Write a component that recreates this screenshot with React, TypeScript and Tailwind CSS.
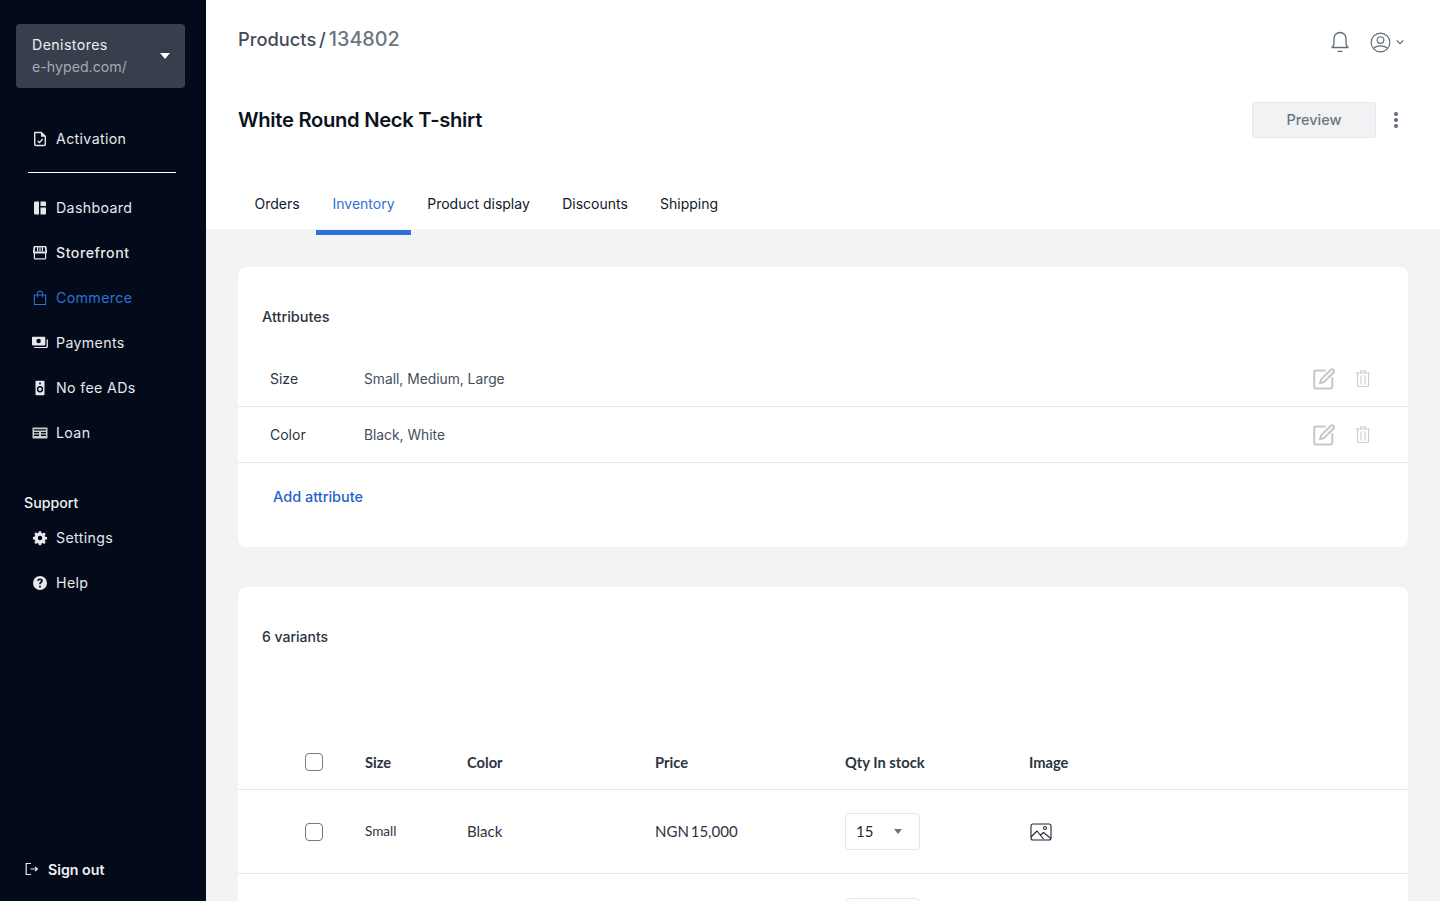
import React from "react";

const F = "[font-family:'Inter','Liberation_Sans',sans-serif]";

const Ic = ({ children, cls = "" }: { children: React.ReactNode; cls?: string }) => (
  <svg viewBox="0 0 16 16" className={"w-4 h-4 " + cls} fill="currentColor">{children}</svg>
);

const icons: Record<string, React.ReactNode> = {
  activation: <Ic><path fillRule="evenodd" d="M3 .8h6.500L14 5v8.500a1.700 1.700 0 0 1-1.700 1.700H3.700A1.700 1.700 0 0 1 2 13.500V1.800a1 1 0 0 1 1-1Zm.4 1.400v11.600h9.200V5.800H9V2.200ZM10.300 7.600l1 .9-3.800 4.100-2.200-2.200 1-1 1.200 1.200Z" /></Ic>,
  dashboard: <Ic><path d="M2 2.500A1 1 0 0 1 3 1.500h4v13H3a1 1 0 0 1-1-1ZM8.500 1.500H13a1 1 0 0 1 1 1V6H8.500ZM8.500 7.500H14v6a1 1 0 0 1-1 1H8.500Z" /></Ic>,
  store: <Ic><path fillRule="evenodd" d="M2.500 1h11a1 1 0 0 1 1 .8L15 6v1.200c0 .5-.3 1-.8 1.200V13a1.500 1.500 0 0 1-1.500 1.500H3.300A1.500 1.500 0 0 1 1.800 13V8.400c-.5-.2-.8-.7-.8-1.200V6l.5-4.200a1 1 0 0 1 1-.8ZM3 8.600V13.200h10V8.600ZM3.300 2.300 2.700 6.500h10.600l-.6-4.200H11v4H9.800v-4H8.600v4H7.400v-4H6.200v4H5v-4Z" /></Ic>,
  bag: <Ic><path fillRule="evenodd" d="M5 4.500V3.800a3 3 0 0 1 6 0v.7h3.200V15H1.800V4.500Zm1 0h4V3.800a2 2 0 0 0-4 0ZM2.900 5.600v8.300h10.200V5.600H11v1.700H10V5.600H6v1.700H5V5.600Z" /></Ic>,
  pay: <Ic><path fillRule="evenodd" d="M.8 1.800h11.700a.8.8 0 0 1 .8.8v7a.8.8 0 0 1-.8.8H.8a.8.8 0 0 1-.8-.8v-7a.8.8 0 0 1 .8-.8Zm5.800 2a2.200 2.200 0 1 0 0 4.500 2.200 2.200 0 0 0 0-4.500ZM14.600 4.500h1.300v7.300a1.300 1.300 0 0 1-1.300 1.300H2.200v-1.200h11.600a.8.8 0 0 0 .8-.8Z" /></Ic>,
  speaker: <Ic><path fillRule="evenodd" d="M4.300 .8h7.400a.8.8 0 0 1 .8.8v12.800a.8.8 0 0 1-.8.8H4.300a.8.8 0 0 1-.8-.8V1.600a.8.8 0 0 1 .8-.8ZM8 2.500a1 1 0 1 0 0 2 1 1 0 0 0 0-2Zm0 3.600a3 3 0 1 0 0 6.300 3 3 0 0 0 0-6.300Zm0 1.400a1.700 1.700 0 1 1 0 3.500 1.700 1.700 0 0 1 0-3.500Z" /></Ic>,
  loan: <Ic><path fillRule="evenodd" d="M.8 2.500h14.400a.3.300 0 0 1 .3.300v10.400a.3.300 0 0 1-.3.300H.8a.3.300 0 0 1-.3-.3V2.800a.3.300 0 0 1 .3-.3ZM2 4.300v1.200h12V4.300Zm0 2.700v1.200h5V7Zm7 0v1.200h5V7ZM2 9.500v1.500h5V9.500Zm7 0v1.500h5V9.500Z" fill="#c8cbd0" /></Ic>,
  gear: <Ic><path fillRule="evenodd" d="M6.900 1.200h2.200l.4 1.800 1.100.5 1.500-1 1.600 1.600-1 1.500.5 1.100 1.800.4v2.200l-1.800.4-.5 1.100 1 1.500-1.600 1.600-1.500-1-1.100.5-.4 1.800H6.900l-.4-1.800-1.100-.5-1.500 1-1.600-1.600 1-1.500-.5-1.100-1.800-.4V6.900l1.800-.4.5-1.100-1-1.500 1.600-1.600 1.500 1 1.100-.5ZM8 5.800a2.200 2.200 0 1 0 0 4.400 2.200 2.200 0 0 0 0-4.400Z" /></Ic>,
  help: <Ic><path fillRule="evenodd" d="M8 1a7 7 0 1 1 0 14A7 7 0 0 1 8 1Zm-.9 9.800v1.700h1.800v-1.700Zm.9-7.300c-1.500 0-2.600.8-2.800 2.200l1.600.3c.1-.7.500-1 1.200-1 .6 0 1 .3 1 .8 0 .4-.2.700-.8 1.100-.8.600-1.100 1.100-1.100 2.100v.3h1.700v-.2c0-.5.100-.7.700-1.100.8-.6 1.300-1.200 1.300-2.200 0-1.400-1.100-2.300-2.800-2.300Z" /></Ic>,
};

const Nav = ({ icon, label, active, gap = "", strong }: { icon: string; label: string; active?: boolean; gap?: string; strong?: boolean }) => (
  <div className={"h-[45px] flex items-center pl-8 " + gap + (active ? " text-[#2f71d6]" : " text-[#e6e8ec]")}>
    <span className="w-4 h-4 flex items-center justify-center">{icons[icon]}</span>
    <span className={"ml-2 text-[14.200px]" + (strong ? " font-medium tracking-[0.5px]" : " tracking-[0.35px]")}>{label}</span>
  </div>
);

const Pencil = () => (
  <svg viewBox="0 0 22 22" className="w-[22px] h-[22px]" fill="none" stroke="#c4c7cc" strokeWidth="2" strokeLinecap="round" strokeLinejoin="round">
    <path d="M12 2.500H3a1.800 1.800 0 0 0-1.800 1.800v14.500A1.800 1.800 0 0 0 3 20.600h14.500a1.800 1.800 0 0 0 1.800-1.800V10" />
    <path d="M17.800 1.800a1.900 1.900 0 0 1 2.700 2.700L11 14l-4 1.200L8.200 11.300Z" />
  </svg>
);

const Trash = () => (
  <svg viewBox="0 0 14 17" className="w-[14px] h-[17px]" fill="none" stroke="#c9ccd0" strokeWidth="1.100">
    <path d="M0 3h14M4.500 3V1h5v2M1.500 3v12.500a1 1 0 0 0 1 1h9a1 1 0 0 0 1-1V3M5 5.500v9M9 5.500v9" />
  </svg>
);

const Checkbox = () => <span className="block w-[18px] h-[18px] rounded-[4px] border-[1.5px] border-[#6f7a86] bg-white" />;

const AttrRow = ({ name, values }: { name: string; values: string }) => (
  <div className="h-[56px] border-b border-[#e4e6e8] flex items-center pl-8 pr-[38px] text-[14px] text-[#374151]">
    <span className="w-[94px] text-[#2c3440]">{name}</span>
    <span className="flex-1 pt-[1px] text-[13.800px] leading-[21px] text-[#454e5a]">{values}</span>
    <span className="flex items-center gap-[21px]"><Pencil /><Trash /></span>
  </div>
);

const Tab = ({ label, active, w }: { label: string; active?: boolean; w: string }) => (
  <div className={"relative h-full flex items-center justify-center pb-[2px] text-[14px] " + w + (active ? " text-[#2f71d6]" : " text-[#111827]")}>
    {label}
    {active && <span className="absolute left-0 right-0 -bottom-[6px] h-[5px] bg-[#2f71d6]" />}
  </div>
);

const Select = ({ value }: { value?: string }) => (
  <span className="w-[75px] h-[37px] border border-[#e4e6e8] rounded-[4px] flex items-center justify-between pl-[10px] pr-[17px] text-[15px] text-[#1f2937] [font-family:'Lato',sans-serif]">
    {value}
    <svg viewBox="0 0 8 5" className="w-2 h-[5px]" fill="#6b7280"><path d="M0 0h8L4 5Z" /></svg>
  </span>
);

const Cols = ({ children, head }: { children: React.ReactNode; head?: boolean }) => (
  <div className={"grid grid-cols-[60px_102px_188px_190px_184px_1fr] items-center [font-family:'Lato',sans-serif] " + (head ? "font-bold text-[14.700px] text-[#2c3440]" : "text-[#2c3440] text-[15px]")}>
    {children}
  </div>
);

export default function App() {
  return (
    <div className={"w-[1440px] h-[901px] flex overflow-hidden bg-[#f2f3f5] " + F}>
      <aside className="w-[206px] h-full shrink-0 bg-[#030a1a] flex flex-col text-white">
        <div className="mt-6 ml-4 w-[169px] h-16 rounded-[4px] bg-[#373f4d] flex items-center justify-between pl-4 pr-[15px]">
          <div className="text-[14.200px] leading-[22px]">
            <div className="text-[#eceef1] tracking-[0.4px]">Denistores</div>
            <div className="text-[#a5a9b1]">e-hyped.com/</div>
          </div>
          <svg viewBox="0 0 10 6" className="w-[10px] h-[6px]" fill="#fff"><path d="M0 0h10L5 6Z" /></svg>
        </div>
        <Nav icon="activation" label="Activation" gap="mt-[28px]" />
        <div className="ml-7 w-[148px] h-px bg-white mt-[11px] mb-3" />
        <Nav icon="dashboard" label="Dashboard" />
        <Nav icon="store" label="Storefront" strong />
        <Nav icon="bag" label="Commerce" active />
        <Nav icon="pay" label="Payments" />
        <Nav icon="speaker" label="No fee ADs" />
        <Nav icon="loan" label="Loan" />
        <div className="ml-6 mt-[38px] text-[14.200px] font-medium text-[#eef0f2] leading-[20px]">Support</div>
        <Nav icon="gear" label="Settings" gap="mt-[2px]" />
        <Nav icon="help" label="Help" />
        <div className="mt-auto mb-[21px] ml-[25px] flex items-center">
          <svg viewBox="0 0 14 14" className="w-[14px] h-[14px]" fill="none" stroke="#e6e8ec" strokeWidth="1.200"><path d="M6 1.500H1.200v11H6M5.500 7h7M10 5l2.500 2L10 9" /></svg>
          <span className="ml-[9px] text-[14.200px] font-semibold text-[#f0f1f3]">Sign out</span>
        </div>
      </aside>

      <main className="flex-1 min-w-0 flex flex-col">
        <header className="bg-white h-[229px] shrink-0 pl-8 pr-[32px] flex flex-col">
          <div className="flex items-start justify-between pt-[26px] h-[102px]">
            <div className="text-[18.300px] leading-[26px] font-medium text-[#434b57] [word-spacing:-2px]">Products / <span className="text-[19.800px] text-[#6b7680]">134802</span></div>
            <div className="flex items-center text-[#5f6b76] pt-[5px]">
              <svg viewBox="0 0 20 22" className="w-5 h-[22px]" fill="none" stroke="currentColor" strokeWidth="1.300" strokeLinejoin="round"><path d="M10 1.500c-3.500 0-6 2.700-6 6.200v4.800c0 1.800-1 3-2 4h16c-1-1-2-2.200-2-4V7.700c0-3.500-2.500-6.200-6-6.200ZM7.500 20.300h5" /></svg>
              <svg viewBox="0 0 22 22" className="ml-5 w-[21px] h-[21px]" fill="none" stroke="currentColor" strokeWidth="1.200"><circle cx="11" cy="11" r="9.800" /><circle cx="11" cy="8.500" r="3.500" /><path d="M3.500 17.500c2-2.500 4.500-3 7.500-3s5.500.5 7.500 3" /></svg>
              <svg viewBox="0 0 10 6" className="ml-[5px] w-2 h-[6px]" fill="none" stroke="currentColor" strokeWidth="1.600"><path d="M1 1l4 4 4-4" /></svg>
              <span className="w-1" />
            </div>
          </div>
          <div className="flex items-center justify-between h-9">
            <h1 className="pt-[1px] text-[20.200px] font-semibold text-[#0b1220] tracking-[-0.3px]">White Round Neck T-shirt</h1>
            <div className="flex items-center">
              <button className="w-[124px] h-9 bg-[#f1f2f4] border border-[#e4e6e9] rounded-[3px] text-[14.500px] font-medium text-[#6b7680]">Preview</button>
              <svg viewBox="0 0 4 18" className="ml-[18px] mr-[10px] w-1 h-[18px]" fill="#5f6b76"><circle cx="2" cy="3" r="2" /><circle cx="2" cy="9" r="2" /><circle cx="2" cy="15" r="2" /></svg>
            </div>
          </div>
          <nav className="mt-auto flex items-center h-[50px]">
            <Tab label="Orders" w="w-[78px]" />
            <Tab label="Inventory" w="w-[95px]" active />
            <span className="w-[16px]" />
            <Tab label="Product display" w="w-[103px]" />
            <span className="w-[32px]" />
            <Tab label="Discounts" w="w-[66px]" />
            <span className="w-[32px]" />
            <Tab label="Shipping" w="w-[58px]" />
          </nav>
        </header>

        <div className="pl-8 pr-[32px] pt-[38px] flex flex-col gap-10">
          <section className="bg-white rounded-[8px] h-[280px] shrink-0">
            <div className="pl-6 pt-[41px] h-[84px] text-[14.500px] font-medium text-[#2c3440] leading-[18px]">Attributes</div>
            <AttrRow name="Size" values="Small, Medium, Large" />
            <AttrRow name="Color" values="Black, White" />
            <div className="pl-[35px] pt-[25px] text-[14.500px] font-medium text-[#2463c9] leading-[18px]">Add attribute</div>
          </section>

          <section className="bg-white rounded-t-[8px] shrink-0 h-[400px]">
            <div className="pl-6 pt-[41px] h-[146px] text-[14px] font-medium text-[#2c3440] leading-[18px]">6 variants</div>
            <div className="h-[57px] border-b border-[#e4e6e8] pl-[67px]">
              <div className="pt-[18px]">
                <Cols head>
                  <Checkbox />
                  <span>Size</span>
                  <span>Color</span>
                  <span>Price</span>
                  <span>Qty In stock</span>
                  <span>Image</span>
                </Cols>
              </div>
            </div>
            <div className="h-[84px] border-b border-[#e4e6e8] pl-[67px] flex items-center">
              <div className="w-full">
                <Cols>
                  <Checkbox />
                  <span className="text-[13.500px]">Small</span>
                  <span>Black</span>
                  <span className="[word-spacing:-2px]">NGN 15,000</span>
                  <Select value="15" />
                  <svg viewBox="0 0 22 18" className="w-[22px] h-[18px] ml-[1px]" fill="none" stroke="#1f2937" strokeWidth="1.100" strokeLinejoin="round"><rect x="1" y="1" width="20" height="16" rx="2" /><circle cx="15" cy="5" r="1.500" /><path d="M1 14l6-6 6.500 8M10 12.500l3.500-3 7.500 6" /></svg>
                </Cols>
              </div>
            </div>
            <div className="h-[84px] pl-[67px] pt-[24px]">
              <div className="ml-[540px]"><Select /></div>
            </div>
          </section>
        </div>
      </main>
    </div>
  );
}
